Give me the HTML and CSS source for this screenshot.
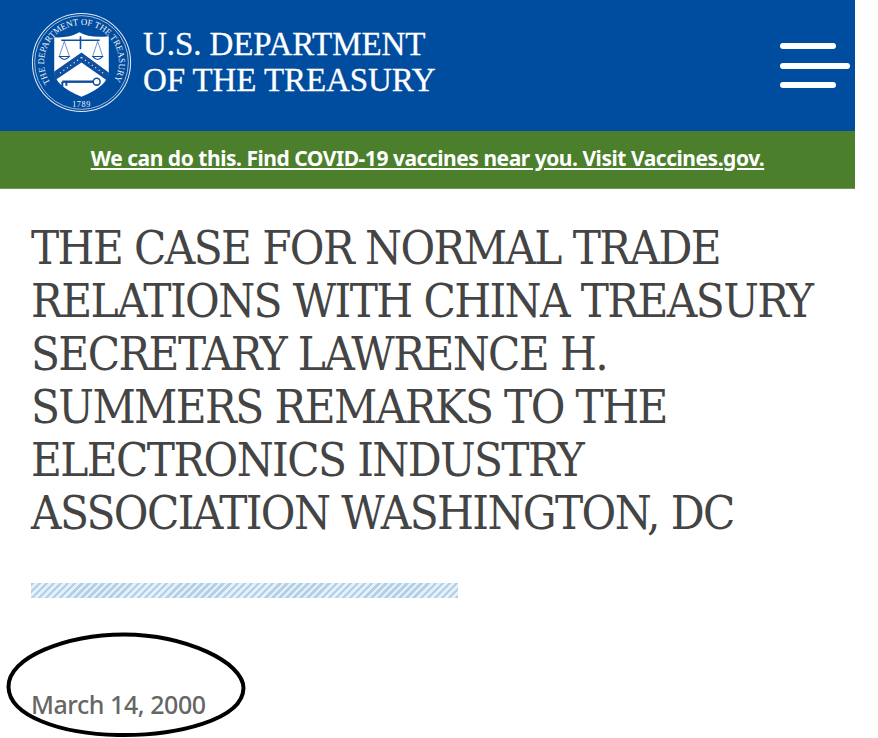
FILE: index.html
```html
<!DOCTYPE html>
<html lang="en">
<head>
<meta charset="utf-8">
<title>The Case for Normal Trade Relations with China</title>
<link rel="stylesheet" href="styles.css">
</head>
<body>
<div class="page">
  <header class="masthead">
    <a class="brand" href="#">
      <svg class="seal" viewBox="0 0 100 100" width="100" height="100" aria-hidden="true">
        <defs>
          <path id="ring-top" d="M 19 70 A 37 37 0 1 1 81 70"/>
        </defs>
        <circle cx="50" cy="50" r="48.6" fill="none" stroke="#e4ebf4" stroke-width="1"/>
        <circle cx="50" cy="50" r="46.4" fill="none" stroke="#e4ebf4" stroke-width=".7"/>
        <text class="seal-ring"><textPath href="#ring-top" textLength="156" lengthAdjust="spacingAndGlyphs">THE DEPARTMENT OF THE TREASURY</textPath></text>
        <text class="seal-year" x="50" y="94" text-anchor="middle">1789</text>
        <path d="M23 25 Q37 26 48 20 Q58 26 77 24 V59 Q77 73 50 84 Q23 73 23 59 Z" fill="#fff"/>
        <path d="M50 40 L77 60 V69 L50 50 L23 68 V59 Z" fill="#0e4f9f"/>
        <path d="M30 28 H68 M49 24 V37" stroke="#0e4f9f" stroke-width="1.600" fill="none"/>
        <path d="M28 44 Q33 50 38 44 Z M61 44 Q66 50 71 44 Z" fill="none" stroke="#0e4f9f" stroke-width="1"/>
        <path d="M33 29 L28 44 M33 29 L38 44 M66 29 L61 44 M66 29 L71 44" stroke="#0e4f9f" stroke-width=".6"/>
        <path d="M31 69 H62" stroke="#0e4f9f" stroke-width="2.400"/>
        <circle cx="65" cy="69" r="3.400" fill="none" stroke="#0e4f9f" stroke-width="1.500"/>
        <path d="M31 69 V74 M35 69 V73" stroke="#0e4f9f" stroke-width="2"/>
        <path d="M50 45 L28 61 M50 45 L72 61" stroke="#fff" stroke-width="1.100" stroke-dasharray="1.200 3" fill="none"/>
      </svg>
      <span class="wordmark">U.S. DEPARTMENT<br>OF THE TREASURY</span>
    </a>
    <button class="menu" type="button" aria-label="Menu">
      <span class="bar"></span>
      <span class="bar bar-long"></span>
      <span class="bar"></span>
    </button>
  </header>
  <div class="notice"><a href="#">We can do this. Find COVID-19 vaccines near you. Visit Vaccines.gov.</a></div>
  <main class="article">
    <h1 class="title">THE CASE FOR NORMAL TRADE RELATIONS WITH CHINA TREASURY SECRETARY LAWRENCE H. SUMMERS REMARKS TO THE ELECTRONICS INDUSTRY ASSOCIATION WASHINGTON, DC</h1>
    <div class="rule"></div>
    <p class="date">March 14, 2000</p>
  </main>
</div>
<svg class="ellipse" viewBox="0 0 240 106" width="240" height="106" aria-hidden="true">
  <path d="M2.500 55 C2 25 60 3 118 2.500 C180 3 237 30 237.500 56 C237 88 170 104 112 103 C55 102 3 84 2.500 55 Z" fill="none" stroke="#000" stroke-width="4"/>
</svg>
</body>
</html>
```
FILE: styles.css
```css
* { box-sizing: border-box; }
html, body { margin: 0; padding: 0; background: #fff; }
body { height: 738px; overflow: hidden; position: relative; }
.page { width: 855px; }
.masthead {
  height: 131px;
  background: #004c9f;
  display: flex;
  align-items: center;
  justify-content: space-between;
  padding: 0 5px 0 31px;
}
.brand { display: flex; align-items: center; gap: 11px; color: #fff; text-decoration: none; margin-top: -7px; }
.seal { width: 101px; height: 101px; flex: none; }
.seal-ring { font: 400 9px "Liberation Serif", serif; fill: #f2f5fa; }
.seal-year { font: 400 8px "Liberation Serif", serif; fill: #f2f5fa; letter-spacing: .6px; }
.wordmark {
  font-family: "Liberation Serif", serif;
  font-size: 33px;
  line-height: 36px;
  letter-spacing: -.1px;
  -webkit-text-stroke: .3px #fff;
  white-space: nowrap;
}
.menu {
  background: none;
  border: 0;
  padding: 0;
  width: 70px;
  display: flex;
  flex-direction: column;
  align-items: flex-start;
}
.bar { display: block; width: 56px; height: 6px; border-radius: 3px; background: #fff; }
.bar-long { width: 70px; margin: 14px 0 13px; }
.notice {
  height: 58px;
  background: #4b7f2c;
  display: flex;
  align-items: center;
  justify-content: center;
  border-bottom: 1px solid #6f9a55;
}
.notice a {
  color: #fff;
  font-family: "Noto Sans", sans-serif;
  font-weight: 700;
  font-size: 21px;
  letter-spacing: -.47px;
  text-decoration: underline;
  white-space: nowrap;
  margin-top: -4px;
}
.article { padding: 32px 20px 0 31px; }
.title {
  margin: 0;
  font-family: "DejaVu Serif Condensed", "DejaVu Serif", serif;
  font-stretch: condensed;
  font-weight: 400;
  font-size: 47px;
  line-height: 53px;
  letter-spacing: -1.6px;
  color: #444;
}
.rule {
  width: 427px;
  height: 15px;
  margin-top: 44px;
  background: repeating-linear-gradient(135deg, #b2d1e9 0 2.500px, #e6f0f8 2.500px 5px);
}
.date {
  margin: 91px 0 0;
  font-family: "Noto Sans", sans-serif;
  font-weight: 500;
  font-size: 25px;
  line-height: 30px;
  letter-spacing: -.45px;
  color: #666;
}
.ellipse { position: absolute; left: 6px; top: 632px; }
```
